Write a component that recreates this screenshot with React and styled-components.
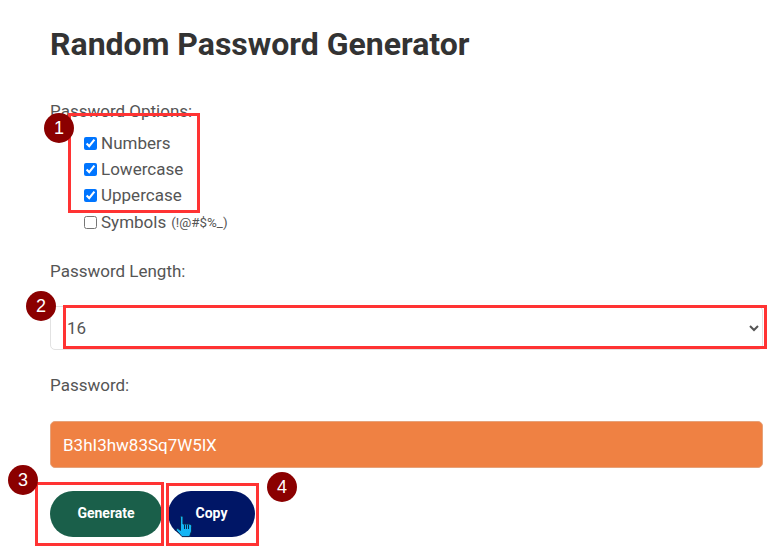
import React from "react";
import styled, { createGlobalStyle } from "styled-components";

const Global = createGlobalStyle`
  html, body { margin: 0; padding: 0; background: #fff; }
  body { font-family: Roboto, "Liberation Sans", sans-serif; color: #555; overflow: hidden; }
`;
const Page = styled.div`
  position: relative;
  width: 780px;
  height: 560px;
  box-sizing: border-box;
  padding: 24px 17px 0 50px;
  overflow: hidden;
`;
const Title = styled.h1`
  margin: 0 0 37px;
  font-size: 32px;
  line-height: 40px;
  font-weight: 700;
  color: #333;
`;
const Label = styled.div`
  font-size: 17px;
  line-height: 20px;
  color: #555;
`;
const Options = styled.div`
  display: flex;
  flex-direction: column;
  gap: 6px;
  margin: 12px 0 29px 34px;
`;
const Option = styled.label`
  display: flex;
  align-items: center;
  gap: 4px;
  height: 20px;
  font-size: 17px;
  color: #555;
  &:last-child { margin-top: 1px; }
`;
const Check = styled.input.attrs({ type: "checkbox" })`
  width: 13px;
  height: 13px;
  margin: 0;
  accent-color: #0075ff;
`;
const Hint = styled.small`
  font-size: 13.4px;
  margin-left: 1px;
`;
const Select = styled.select`
  display: block;
  width: 100%;
  height: 44px;
  margin: 25px 0 25px;
  padding: 0 12px;
  box-sizing: border-box;
  border: 1px solid #e2e2e2;
  border-radius: 5px;
  background: #fff;
  color: #555;
  font: 17px Roboto, sans-serif;
`;
const Output = styled.div`
  height: 47px;
  margin: 26px 0 23px;
  padding: 0 12px;
  display: flex;
  align-items: center;
  box-sizing: border-box;
  background: #ef8143;
  border: 1px solid #e6a27a;
  border-radius: 5px;
  color: #fff;
  font-size: 17px;
`;
const Actions = styled.div`
  display: flex;
  gap: 6px;
`;
const Button = styled.button`
  width: ${(p) => p.$w}px;
  height: 46px;
  padding: 0 0 2px;
  border: 0;
  border-radius: 23px;
  background: ${(p) => p.$bg};
  color: #fff;
  font: 700 14px Roboto, sans-serif;
`;
const Box = styled.div`
  position: absolute;
  left: ${(p) => p.$x}px;
  top: ${(p) => p.$y}px;
  width: ${(p) => p.$w}px;
  height: ${(p) => p.$h}px;
  box-sizing: border-box;
  border: 3px solid #ff3333;
  pointer-events: none;
`;
const Badge = styled.div`
  position: absolute;
  left: ${(p) => p.$x}px;
  top: ${(p) => p.$y}px;
  width: 30px;
  height: 30px;
  border-radius: 50%;
  background: #8b0000;
  color: #fff;
  display: flex;
  align-items: center;
  justify-content: center;
  font: 18px "Liberation Sans", sans-serif;
`;
const Cursor = styled.svg`
  position: absolute;
  left: 175px;
  top: 515px;
`;

export default function App() {
  return (
    <Page>
      <Global />
      <Title>Random Password Generator</Title>
      <Label>Password Options:</Label>
      <Options>
        <Option><Check defaultChecked />Numbers</Option>
        <Option><Check defaultChecked />Lowercase</Option>
        <Option><Check defaultChecked />Uppercase</Option>
        <Option><Check />Symbols <Hint>(!@#$%_)</Hint></Option>
      </Options>
      <Label>Password Length:</Label>
      <Select defaultValue="16">
        <option>16</option>
      </Select>
      <Label>Password:</Label>
      <Output>B3hI3hw83Sq7W5lX</Output>
      <Actions>
        <Button $w={112} $bg="#1a5f4a">Generate</Button>
        <Button $w={87} $bg="#001666">Copy</Button>
      </Actions>
      <Box $x={68} $y={113} $w={132} $h={100} />
      <Box $x={63} $y={305} $w={704} $h={44} />
      <Box $x={35} $y={482} $w={129} $h={64} />
      <Box $x={166} $y={483} $w={93} $h={63} />
      <Badge $x={44} $y={113}>1</Badge>
      <Badge $x={26} $y={291}>2</Badge>
      <Badge $x={8} $y={465}>3</Badge>
      <Badge $x={267} $y={472}>4</Badge>
      <Cursor width="18" height="23" viewBox="0 0 18 23">
        <path d="M5.5 2.2C5.5.6 8 .6 8 2.2V9h6c1.6 0 2.6 1 2.6 2.4V16l-2 5.6H7L1.6 15.5c-.8-1 .3-2.5 1.6-1.7l2.3 1.6z" fill="#12b5f5" stroke="#08264f" strokeWidth="1" />
        <path d="M9.5 9.5V14M11.5 9.5V14M13.5 9.5V14" stroke="#08264f" strokeWidth="1" fill="none" />
      </Cursor>
    </Page>
  );
}
